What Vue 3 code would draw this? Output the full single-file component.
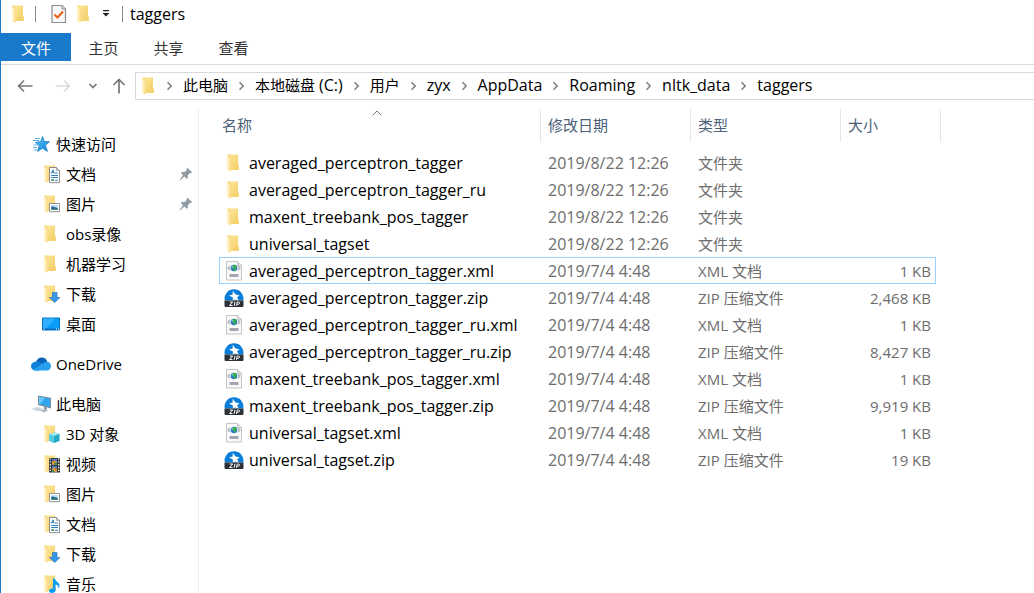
<script setup>
const tabs = ['主页', '共享', '查看']
const crumbs = [
  { zh: '此电脑' },
  { zh: '本地磁盘 ', en: '(C:)' },
  { zh: '用户' },
  { en: 'zyx' },
  { en: 'AppData' },
  { en: 'Roaming' },
  { en: 'nltk_data' },
  { en: 'taggers' },
]

const groups = [
  {
    icon: 'star',
    label: '快速访问',
    items: [
      { icon: 'documents', label: '文档', pinned: true },
      { icon: 'pictures', label: '图片', pinned: true },
      { icon: 'folder', label: 'obs录像' },
      { icon: 'folder', label: '机器学习' },
      { icon: 'downloads', label: '下载' },
      { icon: 'desktop', label: '桌面' },
    ],
  },
  { icon: 'cloud', label: 'OneDrive', items: [] },
  {
    icon: 'computer',
    label: '此电脑',
    items: [
      { icon: 'objects', label: '3D 对象' },
      { icon: 'videos', label: '视频' },
      { icon: 'pictures', label: '图片' },
      { icon: 'documents', label: '文档' },
      { icon: 'downloads', label: '下载' },
      { icon: 'music', label: '音乐' },
    ],
  },
]

const folder = (name) => ({ icon: 'folder', name, date: '2019/8/22 12:26', type: '文件夹', size: '' })
const xml = (name, selected = false) => ({ icon: 'xml', name, date: '2019/7/4 4:48', type: 'XML 文档', size: '1 KB', selected })
const zip = (name, size) => ({ icon: 'zip', name, date: '2019/7/4 4:48', type: 'ZIP 压缩文件', size })

const files = [
  folder('averaged_perceptron_tagger'),
  folder('averaged_perceptron_tagger_ru'),
  folder('maxent_treebank_pos_tagger'),
  folder('universal_tagset'),
  xml('averaged_perceptron_tagger.xml', true),
  zip('averaged_perceptron_tagger.zip', '2,468 KB'),
  xml('averaged_perceptron_tagger_ru.xml'),
  zip('averaged_perceptron_tagger_ru.zip', '8,427 KB'),
  xml('maxent_treebank_pos_tagger.xml'),
  zip('maxent_treebank_pos_tagger.zip', '9,919 KB'),
  xml('universal_tagset.xml'),
  zip('universal_tagset.zip', '19 KB'),
]
</script>

<template>
  <div class="window">
    <svg class="sprite" aria-hidden="true">
      <defs>
        <linearGradient id="gFold" x1="0" y1="0" x2="1" y2="1">
          <stop offset="0" stop-color="#ffe79a" />
          <stop offset="1" stop-color="#f1cb62" />
        </linearGradient>
        <linearGradient id="gStar" x1="0" y1="0" x2="1" y2="1">
          <stop offset="0" stop-color="#5cc4ff" />
          <stop offset="1" stop-color="#0a84d8" />
        </linearGradient>
        <symbol id="i-folder" viewBox="0 0 20 20">
          <path d="M5 1.500h9v11.300h1V17H7z" fill="url(#gFold)" />
          <path d="M13 12.500h2V17h-2z" fill="#f6d577" />
          <path d="M3 1.500h2.500L7 4v13.500L5.500 18.800 3 17z" fill="#fff0bd" />
          <path d="M3 1.500h3L7 3.500V17.500l-1.500 1.300V5z" fill="#f8dc8b" />
        </symbol>
        <symbol id="i-documents" viewBox="0 0 20 20">
          <use href="#i-folder" />
          <path d="M8.500 3.500h7l3 3v12.200h-10z" fill="#fff" stroke="#8c8c8c" />
          <path d="M15.500 3.500v3h3z" fill="#ddd" stroke="#8c8c8c" stroke-width=".7" />
          <path d="M10.300 9.500l1.700-3.700 1.200 3.700M10.700 8.500h2M14 9h3M10.200 11.500h6.800M10.200 13.500h6.800M14 16.300h3" fill="none" stroke="#2f7fc0" />
          <path d="M10.300 15h2.700v2h-2.700z" fill="#55a06f" />
        </symbol>
        <symbol id="i-pictures" viewBox="0 0 20 20">
          <use href="#i-folder" />
          <path d="M8.500 9.500h10v8.200h-10z" fill="#fff" stroke="#929292" />
          <path d="M10.300 11.300h6.400v4.600h-6.400z" fill="#a8d6f3" />
          <path d="M10.300 12.500c3 0 3 1.200 6.400 1.400v2h-6.400z" fill="#276292" />
          <path d="M10.300 15h6.400v.9h-6.400z" fill="#4f9870" />
        </symbol>
        <symbol id="i-downloads" viewBox="0 0 20 20">
          <use href="#i-folder" />
          <path d="M11.500 8.500h4.500v5h3L13.700 18.500 8.500 13.500h3z" fill="#3697e8" stroke="#2876bd" stroke-width=".7" />
        </symbol>
        <symbol id="i-objects" viewBox="0 0 20 20">
          <use href="#i-folder" />
          <path d="M8 10.500l5.500-2 5 1.500v7L13 19l-5-2.500z" fill="#21a9c3" />
          <path d="M8 10.500l5.500-2 5 1.500-5.500 2z" fill="#a6edf4" />
          <path d="M8 10.500l5 1.500v7l-5-2.500z" fill="#54cce0" />
        </symbol>
        <symbol id="i-videos" viewBox="0 0 20 20">
          <use href="#i-folder" />
          <path d="M8 4h11v14.500H8z" fill="#3b3b3b" />
          <path d="M9.300 4.500v13.500M17.700 4.500v13.500" stroke="#fff" stroke-width="1.200" stroke-dasharray="1.300 1.500" />
          <path d="M11 5h5v5.800h-5zM11 12h5v5.800h-5z" fill="#3b78d2" />
          <path d="M11 8l2.500-2L16 8v2.800h-5zM11 15l2.500-2 2.500 2v2.800h-5z" fill="#e2a23e" />
          <path d="M13 8.500h3v2.300h-3zM11 15.800h2v2h-2z" fill="#3e8950" />
          <path d="M12 6h1.500v1.500H12zM14 14h1.500v1.500H14z" fill="#d6433b" />
        </symbol>
        <symbol id="i-music" viewBox="0 0 20 20">
          <use href="#i-folder" />
          <path d="M12 4.500h2c0 3 4.800 3.500 4.500 7.500-.1 1.800-1 2.700-1 2.700.3-2.600-.8-3.700-3-4.200v5.800c0 1.600-1.500 2.700-3.500 2.700S8 18 8 16.800c0-1.500 2-2.600 4-2.300z" fill="#0a9df5" />
        </symbol>
        <symbol id="i-desktop" viewBox="0 0 20 20">
          <path d="M1.500 4h17v12h-17z" fill="#0a9cfb" stroke="#0474c5" />
          <path d="M2 4.500h12L5 14.500H2z" fill="#31b0ff" />
          <path d="M2 14.500h16v1.200H2z" fill="#0868b2" />
          <path d="M2.500 15h1M15 15h1M17 15h1" stroke="#fff" />
        </symbol>
        <symbol id="i-star" viewBox="0 0 20 20">
          <path d="M11.500 2.500l1.800 5 5.200.2-4.200 3.500 2.200 6.200-5-3.200L6.500 17.500l1.800-5.700-3.800-3.300 5.300-1z" fill="url(#gStar)" stroke="#0877bd" stroke-width=".7" />
          <path d="M4 4.500h5M2 6.500h6M2.500 11h4M2 13.500h4M3 16h3" stroke="#5baee4" stroke-width="1" />
        </symbol>
        <symbol id="i-cloud" viewBox="0 0 20 20">
          <path d="M5 9c0-3 2.500-5.500 5.700-5.500 2.700 0 4.800 1.400 5.600 4L12 12z" fill="#0c62b8" />
          <path d="M4.500 16.500C2 16.500 0 14.700 0 12.300 0 10 1.800 8 4.300 7.800c1.700-.5 3.700 0 5 1l5.700 4-6 3.700z" fill="#1180d9" />
          <path d="M2 15.700L12.500 9c1-.8 2.300-1.300 3.500-1.300 2.300 0 4 2 4 4.500s-1.800 4.300-4 4.300H4.500c-.9 0-1.700-.3-2.500-.8z" fill="#28a0ee" />
        </symbol>
        <symbol id="i-computer" viewBox="0 0 20 20">
          <path d="M7 1.500l13 2.200v10.800L7 11z" fill="#7b8d9b" />
          <path d="M8 2.800l11 2v8.300L8 10z" fill="#2ea5f0" />
          <path d="M8 2.800l6 1.100L9 10.300 8 10z" fill="#6ac6ff" />
          <path d="M13 12.800l3 .8v2.200l-3-.8z" fill="#87939c" />
          <path d="M9 16.500l4-1.500 4 1.500-4 2z" fill="#aab4bb" />
          <path d="M0 14.800l7-2 6 2.500L6.500 17.500z" fill="#dde3e7" />
          <path d="M3 14.800l6 1.500M6 14l5 1.500" stroke="#b3bcc4" stroke-width=".6" />
        </symbol>
        <symbol id="i-xml" viewBox="0 0 20 20">
          <path d="M2.500.5h11l4 4v14.500h-15z" fill="#fafafa" stroke="#bdbdbd" stroke-width=".9" />
          <path d="M13.500.5v4h4z" fill="#e0e0e0" stroke="#bdbdbd" stroke-width=".7" />
          <path d="M6 5L4 7l2 2M14 5l2 2-2 2" fill="none" stroke="#a5adb8" stroke-width="1.200" />
          <circle cx="10" cy="7" r="3.300" fill="#2a78c7" />
          <path d="M9.500 4l2-.2 1.500 1.800-1.500 1.700.5 1.700-1.500 1.200-1-2.500L8 6.500z" fill="#37b04f" />
          <path d="M7.200 5.800L9 4.500l-.5 2z" fill="#b6e3f5" />
          <path d="M5.500 13h9v3h-9z" fill="#a6a4b4" />
        </symbol>
        <symbol id="i-zip" viewBox="0 0 20 20">
          <path d="M.8 12.500A9.400 9.400 0 1 1 19.200 12.500z" fill="#087dda" />
          <path d="M8.800 2.700l2.500 3.600 4.200 1.200-2.400 1.700 1.600 3.600-3.700-1.300-2.300 1.300.2-3.200L5 7.500l3.600-1z" fill="#fff" />
          <path d="M.5 12.500h19V17.500c0 1-.7 1.500-1.500 1.500H2c-.8 0-1.500-.5-1.500-1.500z" fill="#2d3238" />
          <path d="M5.800 14h2.900l-3.200 3.500h3M11 13.700L10.200 17.800M12.500 17.800l.7-3.700h1.500c1.400 0 1 2.100-.3 2.100h-1.500" fill="none" stroke="#fff" stroke-width="1" />
        </symbol>
        <symbol id="i-pin" viewBox="0 0 14 14">
          <path d="M8.500.8l4.700 4.400-1.200.9-1-.2-2.200 2.300.1 2.600-1.100 1L5.300 9.500 1.200 13.200l-.6-.4 3.500-4.500L1.900 6l1-1.100 2.700.2 2.200-2.200-.2-1.200z" fill="#909ba5" />
        </symbol>
        <symbol id="i-check" viewBox="0 0 20 20">
          <path d="M3 1.500h10l3.500 3.500v13.500H3z" fill="#f8f8f8" stroke="#8c8c8c" stroke-width="1.200" />
          <path d="M13 1.500V5h3.500" fill="#ddd" stroke="#8c8c8c" />
          <path d="M5.500 10.500l3 3 5.500-6" fill="none" stroke="#ed5f17" stroke-width="2" />
        </symbol>
      </defs>
    </svg>

    <header class="titlebar">
      <svg class="icon"><use href="#i-folder" /></svg>
      <span class="divider"></span>
      <button class="quick" aria-label="属性"><svg class="icon"><use href="#i-check" /></svg></button>
      <button class="quick" aria-label="新建文件夹"><svg class="icon"><use href="#i-folder" /></svg></button>
      <button class="quick more" aria-label="自定义快速访问工具栏">
        <svg width="8" height="8" viewBox="0 0 8 8"><path d="M1 0h6v1.200H1zM.5 3h7L4 6.500z" fill="#222" /></svg>
      </button>
      <span class="divider"></span>
      <h1>taggers</h1>
    </header>

    <nav class="ribbon">
      <button class="tab file">文件</button>
      <button v-for="t in tabs" :key="t" class="tab">{{ t }}</button>
    </nav>

    <div class="navbar">
      <button class="nav back" aria-label="后退">
        <svg width="16" height="14" viewBox="0 0 16 14"><path d="M15.500 7H1.500M7 1.500L1.500 7 7 12.500" fill="none" stroke="#777" stroke-width="1.600" /></svg>
      </button>
      <button class="nav forward" aria-label="前进" disabled>
        <svg width="16" height="14" viewBox="0 0 16 14"><path d="M.5 7h14M9 1.500L14.500 7 9 12.500" fill="none" stroke="#d9d9d9" stroke-width="1.600" /></svg>
      </button>
      <button class="nav recent" aria-label="最近位置">
        <svg width="10" height="8" viewBox="0 0 10 8"><path d="M1.500 2L5 5.500 8.500 2" fill="none" stroke="#7a7a7a" stroke-width="1.700" /></svg>
      </button>
      <button class="nav up" aria-label="上移">
        <svg width="14" height="16" viewBox="0 0 14 16"><path d="M7 15.500V1.500M1.500 7L7 1.500 12.500 7" fill="none" stroke="#777" stroke-width="1.700" /></svg>
      </button>
      <div class="address">
        <svg class="icon"><use href="#i-folder" /></svg>
        <template v-for="(c, n) in crumbs" :key="n">
          <svg class="chevron" viewBox="0 0 27 10"><path d="M11.500 1.200L15.200 5l-3.700 3.800" fill="none" stroke="#7d7d7d" stroke-width="1.500" /></svg>
          <a href="#">{{ c.zh }}<span v-if="c.en" class="latin">{{ c.en }}</span></a>
        </template>
      </div>
    </div>

    <div class="content">
      <nav class="sidebar">
        <section v-for="g in groups" :key="g.label">
          <a href="#" class="entry root"><svg class="icon"><use :href="'#i-' + g.icon" /></svg>{{ g.label }}</a>
          <a v-for="i in g.items" :key="i.label" href="#" class="entry">
            <svg class="icon"><use :href="'#i-' + i.icon" /></svg>{{ i.label }}
            <svg v-if="i.pinned" class="pin"><use href="#i-pin" /></svg>
          </a>
        </section>
      </nav>

      <main class="files">
        <table>
          <colgroup>
            <col class="c-name" /><col class="c-date" /><col class="c-type" /><col class="c-size" /><col class="c-edge" />
          </colgroup>
          <thead>
            <tr>
              <th>
                名称
                <svg class="sort" viewBox="0 0 10 6"><path d="M.7 5.300L5 1l4.300 4.300" fill="none" stroke="#777" /></svg>
              </th>
              <th>修改日期</th>
              <th>类型</th>
              <th class="open">大小</th>
              <td class="edge"></td>
            </tr>
          </thead>
          <tbody>
            <tr v-for="f in files" :key="f.name" :class="{ selected: f.selected }">
              <td class="name">
                <div class="file-name"><svg class="icon"><use :href="'#i-' + f.icon" /></svg>{{ f.name }}</div>
              </td>
              <td class="latin">{{ f.date }}</td>
              <td>{{ f.type }}</td>
              <td class="size">{{ f.size }}</td>
              <td></td>
            </tr>
          </tbody>
        </table>
      </main>
    </div>
  </div>
</template>

<style>
body {
  margin: 0;
  background: #fff;
}
</style>

<style scoped>
.window {
  display: flex;
  flex-direction: column;
  height: 100vh;
  overflow: hidden;
  box-sizing: border-box;
  border-left: 1px solid #1979ca;
  background: #fff;
  color: #000;
  font: 15px/20px "Open Sans", "Noto Sans CJK SC", sans-serif;
}
.sprite {
  position: absolute;
  width: 0;
  height: 0;
}
button {
  display: flex;
  align-items: center;
  justify-content: center;
  padding: 0;
  border: 0;
  background: none;
  color: inherit;
  font: inherit;
}
a {
  color: inherit;
  text-decoration: none;
}
.icon {
  flex: none;
  width: 20px;
  height: 20px;
}
.latin {
  font-size: 16px;
}

.titlebar {
  display: flex;
  align-items: center;
  height: 30px;
  padding: 0 0 3px 8px;
  box-sizing: border-box;
  flex: none;
}
.titlebar h1 {
  margin: 0 0 0 7px;
  font-size: 16px;
  font-weight: 400;
}
.divider {
  width: 1px;
  height: 16px;
  margin-left: 6px;
  background: #8a8a8a;
}
.quick {
  margin-left: 13px;
}
.quick + .quick {
  margin-left: 5px;
}
.quick.more {
  width: 8px;
  margin: 0 6px 0 8px;
}
.quick + .quick.more {
  margin-left: 8px;
}

.ribbon {
  display: flex;
  flex: none;
  padding: 3px 0;
  border-bottom: 1px solid #dadbdc;
}
.tab {
  width: 65px;
  height: 28px;
  padding-top: 1px;
  color: #333;
}
.tab.file {
  width: 70px;
  background: #1979ca;
  color: #fff;
}

.navbar {
  display: flex;
  align-items: center;
  flex: none;
  padding: 7px 0 9px 16px;
}
.forward {
  margin-left: 22px;
}
.recent {
  margin-left: 17px;
}
.up {
  margin-left: 14px;
}
.address {
  display: flex;
  flex: 1;
  align-items: center;
  height: 26px;
  margin-left: 9px;
  padding-left: 3px;
  border: 1px solid #d9d9d9;
  border-right: 0;
  white-space: nowrap;
}
.address a {
  padding-bottom: 2px;
}
.chevron {
  flex: none;
  width: 27px;
  height: 10px;
}
.address .icon + .chevron {
  margin-left: -3px;
}

.content {
  display: flex;
  flex: 1;
  min-height: 0;
}
.sidebar {
  display: flex;
  flex-direction: column;
  flex: none;
  gap: 10px;
  width: 198px;
  padding-top: 20px;
  box-sizing: border-box;
  overflow: hidden;
  border-right: 1px solid #f0f0f0;
}
.entry {
  display: flex;
  align-items: center;
  gap: 5px;
  height: 30px;
  padding: 0 5px 0 40px;
}
.entry.root {
  padding-left: 30px;
}
.pin {
  width: 14px;
  height: 14px;
  margin-left: auto;
}

.files {
  flex: 1;
  padding-left: 20px;
  min-width: 0;
}
table {
  width: 722px;
  table-layout: fixed;
  border-collapse: separate;
  border-spacing: 0;
}
.c-name {
  width: 322px;
}
.c-date,
.c-type {
  width: 150px;
}
.c-size {
  width: 95px;
}
.c-edge {
  width: 5px;
}
th {
  position: relative;
  height: 31px;
  padding: 0 0 2px 7px;
  border-right: 1px solid #e5e5e5;
  color: #4c607a;
  font-weight: 400;
  text-align: left;
}
th:first-child {
  padding-left: 3px;
}
th.open {
  border-right: 0;
}
.edge {
  border-right: 1px solid #e5e5e5;
}
.sort {
  position: absolute;
  top: 1px;
  left: 153px;
  width: 10px;
  height: 6px;
}
tbody::before {
  content: "";
  display: block;
  height: 7px;
}
tbody td {
  height: 25px;
  padding: 0 0 0 7px;
  border: solid transparent;
  border-width: 1px 0;
  color: #6d6d6d;
  white-space: nowrap;
}
tbody td.name {
  padding-left: 4px;
  border-left-width: 1px;
  color: #000;
  font-size: 16px;
}
tbody td.size {
  padding: 0 4px 0 0;
  border-right-width: 1px;
  text-align: right;
}
tbody td:last-child {
  padding: 0;
}
.selected td:not(:last-child) {
  border-color: #99d1ff;
}
.file-name {
  display: flex;
  align-items: center;
  gap: 5px;
}
</style>
